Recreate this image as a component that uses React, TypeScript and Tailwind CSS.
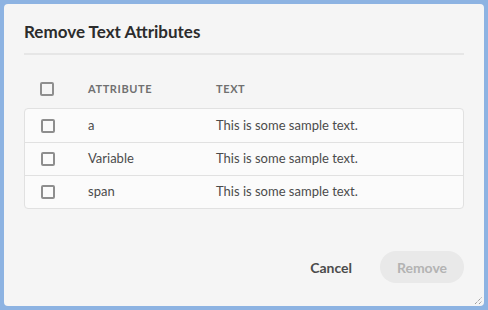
import React from "react";

function Box() {
  return <div className="w-[14px] h-[14px] rounded-[2px] border-2 border-[#8e8e8e] bg-transparent" />;
}

const rows = ["a", "Variable", "span"];

export default function App() {
  return (
    <div className="w-[488px] h-[310px] bg-[#8db3e2] p-[4px]" style={{ fontFamily: 'Lato, "Open Sans", sans-serif' }}>
      <div className="relative w-[480px] h-[302px] bg-[#f5f5f5] rounded-[4px] flex flex-col px-[20px]">
        <div className="pt-[17px] text-[17px] leading-[22px] font-bold text-[#2c2c2c]">Remove Text Attributes</div>
        <div className="mt-[10px] h-[2px] bg-[#e6e6e6]" />
        <div className="mt-[25px] flex items-center h-[18px]">
          <div className="w-[64px] pl-[16px] flex items-center"><Box /></div>
          <div className="w-[128px] text-[11px] font-bold tracking-[0.6px] text-[#707070]">ATTRIBUTE</div>
          <div className="text-[11px] font-bold tracking-[0.6px] text-[#707070]">TEXT</div>
        </div>
        <div className="mt-[10px] border border-[#e1e1e1] rounded-[4px] bg-[#fbfbfb]">
          {rows.map((r, i) => (
            <div key={r} className={`flex items-center h-[33px] ${i > 0 ? "border-t border-[#e1e1e1]" : ""}`}>
              <div className="w-[63px] pl-[16px] flex items-center"><Box /></div>
              <div className="w-[128px] text-[13px] text-[#4b4b4b]">{r}</div>
              <div className="text-[13px] text-[#4b4b4b]">This is some sample text.</div>
            </div>
          ))}
        </div>
        <div className="mt-[42px] flex justify-end items-center gap-[14px]">
          <div className="px-[14px] h-[32px] flex items-center text-[14px] font-bold text-[#4b4b4b]">Cancel</div>
          <div className="w-[84px] h-[32px] rounded-full bg-[#e9e9e9] flex items-center justify-center text-[14px] font-bold text-[#b3b3b3]">Remove</div>
        </div>
        <svg className="absolute right-[1px] bottom-[1px]" width="9" height="9" viewBox="0 0 9 9">
          <line x1="1" y1="8" x2="8" y2="1" stroke="#777" strokeWidth="1" strokeDasharray="1 1" />
          <line x1="5" y1="8" x2="8" y2="5" stroke="#777" strokeWidth="1" strokeDasharray="1 1" />
        </svg>
      </div>
    </div>
  );
}
